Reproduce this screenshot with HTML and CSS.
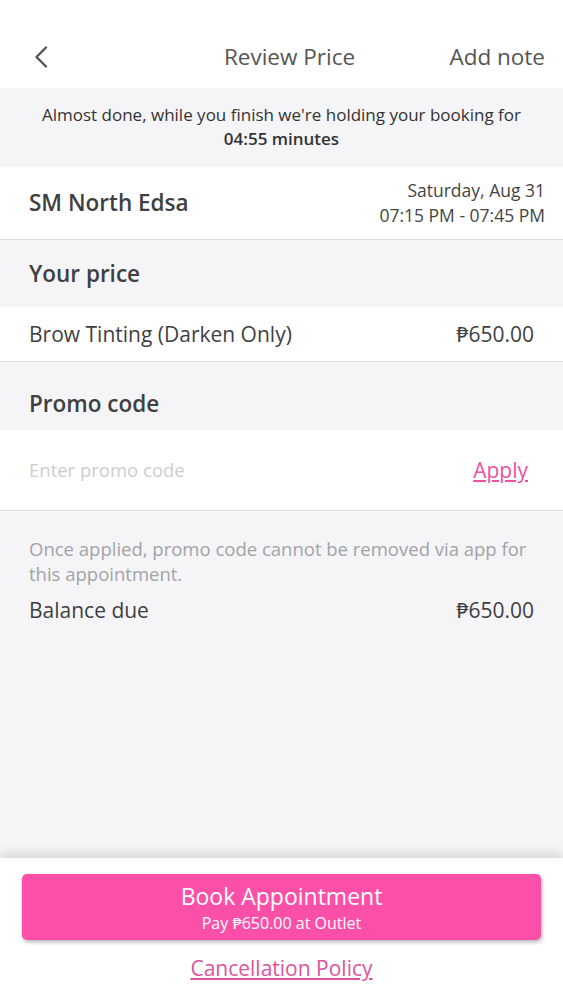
FILE: index.html
```html
<!DOCTYPE html>
<html lang="en">
<head>
    <meta charset="UTF-8">
    <meta name="viewport" content="width=device-width, initial-scale=1.0">
    <title>Review Price</title>
    <link rel="stylesheet" href="styles.css">
</head>
<body>
    <div class="page">
        <!-- top bar -->
        <div class="topbar">
            <button class="back" aria-label="Back">
                <svg width="14" height="22" viewBox="0 0 14 22"><path d="M12 1.5 L2.5 11 L12 20.5" fill="none" stroke="#555" stroke-width="2.4" stroke-linecap="round" stroke-linejoin="round"/></svg>
            </button>
            <div class="title">Review Price</div>
            <div class="add-note">Add note</div>
        </div>

        <!-- hold notice -->
        <div class="notice">
            Almost done, while you finish we're holding your booking for<br>
            <b>04:55 minutes</b>
        </div>

        <!-- outlet + time -->
        <div class="outlet">
            <div class="outlet-name">SM North Edsa</div>
            <div class="outlet-time">
                <div>Saturday, Aug 31</div>
                <div>07:15 PM - 07:45 PM</div>
            </div>
        </div>

        <div class="section-head">Your price</div>
        <div class="row">
            <span>Brow Tinting (Darken Only)</span>
            <span>₱650.00</span>
        </div>

        <div class="section-head promo-head">Promo code</div>
        <div class="promo">
            <input type="text" placeholder="Enter promo code">
            <a href="#" class="apply">Apply</a>
        </div>

        <div class="summary">
            <p class="hint">Once applied, promo code cannot be removed via app for this appointment.</p>
            <div class="balance">
                <span>Balance due</span>
                <span>₱650.00</span>
            </div>
        </div>

        <!-- bottom action -->
        <div class="footer">
            <button class="book">
                <span class="book-title">Book Appointment</span>
                <span class="book-sub">Pay ₱650.00 at Outlet</span>
            </button>
            <a href="#" class="policy">Cancellation Policy</a>
        </div>
    </div>
</body>
</html>
```

FILE: styles.css
```css
body {
    margin: 0;
    font-family: 'Open Sans', 'Lato', sans-serif;
    background-color: #f5f4f7;
    color: #3f3f42;
}
.page {
    display: flex;
    flex-direction: column;
    min-height: 1000px;
}
.topbar {
    display: grid;
    grid-template-columns: 1fr auto 1fr;
    align-items: center;
    height: 88px;
    padding: 26px 18px 0 34px;
    background-color: #fff;
    box-sizing: border-box;
}
.back {
    justify-self: start;
    border: none;
    background: none;
    padding: 0;
    margin-top: 2px;
}
.title {
    font-size: 22.5px;
    line-height: 30px;
    color: #555;
}
.add-note {
    justify-self: end;
    font-size: 22.5px;
    line-height: 30px;
    color: #555;
}
.notice {
    padding: 15px 0 16px;
    text-align: center;
    font-size: 17px;
    line-height: 24px;
    color: #333;
}
.notice b {
    font-weight: 600;
}
.outlet {
    display: flex;
    justify-content: space-between;
    align-items: center;
    height: 72px;
    padding: 0 18px 0 29px;
    background-color: #fff;
    border-bottom: 1px solid #dcdcde;
}
.outlet-name {
    font-size: 22.5px;
    line-height: 30px;
    font-weight: 600;
}
.outlet-time {
    text-align: right;
    font-size: 17.5px;
    line-height: 25px;
    color: #444;
}
.section-head {
    height: 67px;
    line-height: 67px;
    padding-left: 29px;
    font-size: 22.5px;
    font-weight: 600;
}
.promo-head {
    height: 68px;
    line-height: 84px;
}
.row {
    display: flex;
    justify-content: space-between;
    align-items: center;
    height: 54px;
    padding: 0 29px;
    background-color: #fff;
    border-bottom: 1px solid #dcdcde;
    font-size: 21px;
    line-height: 28px;
}
.promo {
    display: flex;
    justify-content: space-between;
    align-items: center;
    height: 80px;
    padding: 0 35px 0 29px;
    background-color: #fff;
    border-bottom: 1px solid #dcdcde;
}
.promo input {
    border: none;
    outline: none;
    padding: 0;
    font-family: inherit;
    font-size: 18.5px;
    line-height: 26px;
    background: none;
}
.promo input::placeholder {
    color: #cdcdd0;
}
.apply {
    font-size: 21px;
    line-height: 28px;
    color: #f04fa2;
    text-decoration: underline;
}
.summary {
    padding: 25px 29px 0;
}
.hint {
    margin: 0;
    font-size: 18.5px;
    line-height: 25px;
    color: #a3a3a6;
}
.balance {
    display: flex;
    justify-content: space-between;
    margin-top: 10px;
    font-size: 21px;
    line-height: 28px;
}
.footer {
    margin-top: auto;
    display: flex;
    flex-direction: column;
    align-items: center;
    height: 142px;
    padding: 16px 22px 0;
    box-sizing: border-box;
    background-color: #fff;
    box-shadow: 0 -5px 10px rgba(0, 0, 0, 0.12);
}
.book {
    display: flex;
    flex-direction: column;
    align-items: center;
    width: 100%;
    height: 66px;
    padding: 7px 0 0;
    border: none;
    border-radius: 5px;
    background-color: #fc50a8;
    color: #fff;
    font-family: inherit;
    box-shadow: 1px 2px 4px rgba(0, 0, 0, 0.3);
}
.book-title {
    font-size: 23px;
    line-height: 30px;
}
.book-sub {
    font-size: 16px;
    line-height: 24px;
}
.policy {
    margin-top: 14px;
    font-size: 21px;
    line-height: 28px;
    color: #e0529c;
    text-decoration: underline;
}
```
